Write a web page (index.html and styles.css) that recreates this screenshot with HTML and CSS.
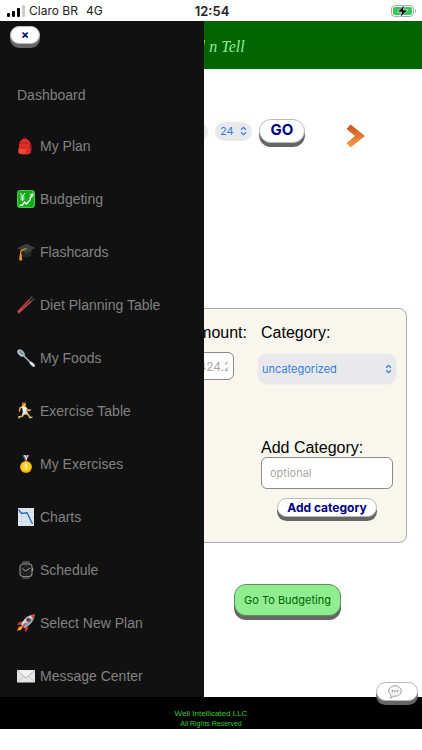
FILE: index.html
```html
<!DOCTYPE html>
<html lang="en">
<head>
    <meta charset="UTF-8">
    <meta name="viewport" content="width=device-width, initial-scale=1.0">
    <title>Well n Tell</title>
    <link rel="stylesheet" href="styles.css">
</head>
<body>

    <!-- phone status bar -->
    <div class="status-bar">
        <div class="carrier">
            <svg width="18" height="12" viewBox="0 0 18 12">
                <rect x="0" y="8" width="3" height="4" rx="1"/>
                <rect x="5" y="6" width="3" height="6" rx="1"/>
                <rect x="10" y="3" width="3" height="9" rx="1"/>
                <rect x="15" y="0" width="3" height="12" rx="1" fill="#ccc"/>
            </svg>
            <span>Claro BR</span>
            <span class="network">4G</span>
        </div>
        <div class="clock">12:54</div>
        <div class="battery">
            <svg width="26" height="14" viewBox="0 0 26 14">
                <rect x="0.5" y="1.5" width="22" height="11" rx="3.5" fill="#fff" stroke="#a9a9a9"/>
                <rect x="2" y="3" width="19" height="8" rx="2" fill="#34c759"/>
                <path d="M24 5c1.3.4 1.3 3.6 0 4z" fill="#a9a9a9"/>
                <path d="M13.5 0.5 6.5 8h4l-1.500 5.500L17 6h-4.500z" fill="#000" stroke="#fff" stroke-width="0.7"/>
            </svg>
        </div>
    </div>

    <div class="app">

        <!-- side menu, opens over the page -->
        <nav class="sidenav">
            <div class="sidenav-top">
                <button class="btn btn-close" aria-label="Close menu">×</button>
            </div>
            <a href="#" class="menu-link">Dashboard</a>
            <a href="#" class="menu-link menu-item">
                <svg class="icon" viewBox="0 0 18 18">
                    <path d="M6.500 3V1.500Q6.500.5 7.700.5t1.300 1V3" fill="none" stroke="#a4221c"/>
                    <path d="M12 4q3 3 2.500 8l-1.500 4" fill="none" stroke="#7d2420" stroke-width="1"/>
                    <path d="M2 8q.5-6 6-6.200 5 .2 5.300 6.200l.5 7.500Q13 17.500 8 17.500T1.500 16z" fill="#df2d27"/>
                    <path d="M1.500 11h7.500v5.500q-6 .5-7.500-.5z" fill="#f0453c"/>
                    <path d="M3 6.500q4-2 9 0M2 11h7" fill="none" stroke="#a81c19" stroke-width=".7"/>
                </svg>
                My Plan
            </a>
            <a href="#" class="menu-link menu-item">
                <svg class="icon" viewBox="0 0 18 18">
                    <rect width="18" height="18" rx="3" fill="#12ad18"/>
                    <rect x=".5" y=".5" width="17" height="17" rx="3" fill="none" stroke="#44c946"/>
                    <path d="M3 3l2.500 3.500L8 3M5.500 6.500V11M3.500 7h4M3.500 9h4" fill="none" stroke="#fff" stroke-width="1"/>
                    <path d="M2.500 15.500l3-.5 2-3 2 2 3.500-4 .5-2.500L16 4.500" fill="none" stroke="#fff" stroke-width="1.400"/>
                    <path d="M12.500 4.500L16.500 3 16 7z" fill="#fff"/>
                </svg>
                Budgeting
            </a>
            <a href="#" class="menu-link menu-item">
                <svg class="icon" viewBox="0 0 18 18">
                    <path d="M5 8v5q3 3 9 0l1-6z" fill="#242628"/>
                    <path d="M.5 5.500L9.500 1l8 4-7.500 5.500z" fill="#3c3f42"/>
                    <path d="M.5 5.500L9.500 1l8 4" fill="none" stroke="#505355" stroke-width=".5"/>
                    <path d="M9.500 5.500L4.500 7.500q-1 1-1 6" fill="none" stroke="#e79c23" stroke-width="1.200"/>
                    <path d="M2.800 11h1.800l.6 6-1.500.8-1.500-.8z" fill="#e79c23"/>
                </svg>
                Flashcards
            </a>
            <a href="#" class="menu-link menu-item">
                <svg class="icon" viewBox="0 0 18 18">
                    <path d="M1 15.500L12 4M1.500 17L14 5.500" stroke="#c4413e" stroke-width="1.500" stroke-linecap="round"/>
                    <path d="M12 4l3-3M14 5.500L17 3" stroke="#55494a" stroke-width="1.500" stroke-linecap="round"/>
                    <path d="M2 16L13.500 5" stroke="#ef7770" stroke-width=".4"/>
                </svg>
                Diet Planning Table
            </a>
            <a href="#" class="menu-link menu-item">
                <svg class="icon" viewBox="0 0 18 18">
                    <path d="M6 6l10.500 10.500" stroke="#a9b5c0" stroke-width="1.500" stroke-linecap="round"/>
                    <path d="M14 14l2.600 2.600" stroke="#dce5ed" stroke-width="2.800" stroke-linecap="round"/>
                    <ellipse cx="4" cy="4" rx="2.800" ry="4.200" transform="rotate(-45 4 4)" fill="#c4d1dc"/>
                    <ellipse cx="4.300" cy="3.800" rx="1.600" ry="3" transform="rotate(-45 4.300 3.800)" fill="#8293a0"/>
                </svg>
                My Foods
            </a>
            <a href="#" class="menu-link menu-item">
                <svg class="icon" viewBox="0 0 18 18">
                    <path d="M6 4.500L3 6 2.500 9M9 6l2 2.500 2.500-.5" fill="none" stroke="#f3bc36" stroke-width="1.400" stroke-linecap="round"/>
                    <path d="M8 10.500l3 2 2 3M7 11l-1.500 3-3 1" fill="none" stroke="#efb12c" stroke-width="1.700"/>
                    <path d="M5 4l4 .5 1 6-4 1z" fill="#f5f5f4"/>
                    <path d="M6 9.500l4-.5 1 2.500-2.500 1-3.500.5z" fill="#dedede"/>
                    <circle cx="7" cy="2.200" r="2" fill="#f8c13b"/>
                    <path d="M5 2q0-2 2-2l2 1.500q-2 0-2 1z" fill="#875727"/>
                    <path d="M12.500 15.800l3-.8M2 14v2.500" stroke="#e6e6e6" stroke-width="1.200"/>
                </svg>
                Exercise Table
            </a>
            <a href="#" class="menu-link menu-item">
                <svg class="icon" viewBox="0 0 18 18">
                    <path d="M5 0h2.500L10 6H8z" fill="#3d4f9f"/>
                    <path d="M7 0h1.500L10 4 9 6z" fill="#e7e7ef"/>
                    <path d="M12.500 0H10L7.500 6h2z" fill="#a73551"/>
                    <path d="M11 0h-1.200L8.500 5.500h1z" fill="#f1e6eb"/>
                    <circle cx="9" cy="12" r="6" fill="#e9a313"/>
                    <circle cx="9" cy="11.700" r="5" fill="#ffce26"/>
                    <path d="M7.800 10.300l1.400-1v5.500" fill="none" stroke="#fff0ad" stroke-width="1.500"/>
                </svg>
                My Exercises
            </a>
            <a href="#" class="menu-link menu-item">
                <svg class="icon" viewBox="0 0 18 18">
                    <rect x="1" width="16" height="18" fill="#dce7ef"/>
                    <path d="M5 0v18M9 0v18M13 0v18M1 4.500h16M1 9h16M1 13.500h16" stroke="#c2d3df" stroke-width=".5"/>
                    <path d="M1.500 1.500l3 4 5.500-.7L15.500 16" fill="none" stroke="#2a68bd" stroke-width="1.300"/>
                </svg>
                Charts
            </a>
            <a href="#" class="menu-link menu-item">
                <svg class="icon" viewBox="0 0 18 18">
                    <path d="M5 4l.5-4h7l.5 4zM5 14l.5 4h7l.5-4z" fill="#484848"/>
                    <rect x="3" y="3" width="12" height="12.500" rx="3" fill="#1c1c1c" stroke="#888" stroke-width="1.200"/>
                    <path d="M15.700 7v3" stroke="#aaa" stroke-width="1"/>
                    <path d="M5.500 7.500L8.500 10 13 7" fill="none" stroke="#bbb" stroke-width=".9"/>
                    <circle cx="9" cy="9.200" r="4.300" fill="none" stroke="#686868" stroke-width=".7" stroke-dasharray=".7 1.500"/>
                </svg>
                Schedule
            </a>
            <a href="#" class="menu-link menu-item">
                <svg class="icon" viewBox="0 0 18 18">
                    <path d="M6 7.500L2 8 0 11l4.500-.5M10.500 12l.5 3-3 3-.2-4.500" fill="#d7382d"/>
                    <path d="M5 11.500L1.500 13 0 17l4-1.300 2-2.700z" fill="#f46d20"/>
                    <path d="M4.500 12.500L2 14.500l-.8 1.700 3-1z" fill="#ffd43a"/>
                    <path d="M17.500.5Q10 .5 5 8.500l-.8 2.500L7 13.800l2.500-.8Q17.500 8 17.500.5z" fill="#cbd9e4"/>
                    <path d="M17.500.5q-.2 7-8 12.500L7 13.800 5.500 12Q14 7 17.500.5z" fill="#8ea3b6"/>
                    <path d="M13.500 1.500Q15 .5 17.500.5q0 2.500-1 4.200z" fill="#dc3b32"/>
                    <circle cx="11.500" cy="6" r="2" fill="#33485b" stroke="#c33d39" stroke-width=".8"/>
                    <path d="M9 9l-4 4" stroke="#d33b31" stroke-width="1.400"/>
                </svg>
                Select New Plan
            </a>
            <a href="#" class="menu-link menu-item">
                <svg class="icon" viewBox="0 0 18 18">
                    <rect y="3" width="18" height="12.500" rx=".7" fill="#e4e4e4"/>
                    <path d="M.5 15l6.500-6M17.500 15L11 9" stroke="#b7b7b7" stroke-width=".7"/>
                    <path d="M.5 3.500l7.300 6.500q1.200 1 2.400 0l7.300-6.500" fill="#f2f2f2" stroke="#9c9c9c" stroke-width=".7"/>
                </svg>
                Message Center
            </a>
        </nav>

        <header class="header">
            <h1 class="logo">Well n Tell</h1>
        </header>

        <main class="main">
            <form class="date-row">
                <div class="picker">
                    <select class="select" aria-label="Day">
                        <option>24</option>
                    </select>
                    <svg class="arrows" viewBox="0 0 8 12"><path d="M1 4.500l3-3 3 3M1 7.500l3 3 3-3"/></svg>
                </div>
                <div class="picker">
                    <select class="select" aria-label="Year">
                        <option>24</option>
                    </select>
                    <svg class="arrows" viewBox="0 0 8 12"><path d="M1 4.500l3-3 3 3M1 7.500l3 3 3-3"/></svg>
                </div>
                <button type="button" class="btn btn-go">GO</button>
                <button type="button" class="next" aria-label="Next day">
                    <svg width="20" height="24" viewBox="0 0 20 24">
                        <defs>
                            <linearGradient id="orange" x1="0" y1="0" x2="0" y2="1">
                                <stop offset="0" stop-color="#c9501f"/>
                                <stop offset="1" stop-color="#f4a04c"/>
                            </linearGradient>
                        </defs>
                        <path d="M4.500.5L19 12 4.500 23.500.5 19 9 12 .5 5z" fill="url(#orange)"/>
                    </svg>
                </button>
            </form>

            <form class="card">
                <div class="amount">
                    <label class="label" for="amount">Amount:</label>
                    <input class="input input-amount" id="amount" type="text" placeholder="424.25">
                </div>
                <div class="category">
                    <label class="label" for="category">Category:</label>
                    <div class="picker picker-wide">
                        <select class="select select-wide" id="category">
                            <option>uncategorized</option>
                        </select>
                        <svg class="arrows" viewBox="0 0 8 12"><path d="M1 4.500l3-3 3 3M1 7.500l3 3 3-3"/></svg>
                    </div>
                    <label class="label label-add" for="new-category">Add Category:</label>
                    <input class="input" id="new-category" type="text" placeholder="optional">
                    <button type="button" class="btn btn-add">Add category</button>
                </div>
            </form>

            <div class="actions">
                <button class="btn btn-budget">Go To Budgeting</button>
            </div>
        </main>

        <button class="btn btn-chat" aria-label="Chat">
            <svg width="14" height="14" viewBox="0 0 14 14">
                <path d="M7 .8c3.700 0 6.300 2.200 6.300 5.200s-2.600 5.200-6.300 5.200l-1.500-.1Q4 13 2 13q1.300-1.300 1-2.900Q.7 8.700.7 6C.7 3 3.300.8 7 .8z" fill="#f4f4f4" stroke="#888" stroke-width=".8"/>
                <circle cx="4.500" cy="6" r=".8" fill="#777"/>
                <circle cx="7" cy="6" r=".8" fill="#777"/>
                <circle cx="9.500" cy="6" r=".8" fill="#777"/>
            </svg>
        </button>
    </div>

    <footer class="footer">
        <p class="company">Well Intellicated LLC</p>
        <p class="rights">All Rights Reserved</p>
    </footer>

</body>
</html>
```
FILE: styles.css
```css
*{
    box-sizing: border-box;
    margin: 0;
    padding: 0;
}

body{
    background-color: white;
    font-family: "Liberation Sans", Arial, sans-serif;
    font-size: 16px;
    color: black;
}

button, input, select{
    font-family: Inter, sans-serif;
    font-size: 11px;
}

/* status bar */

.status-bar{
    display: flex;
    align-items: center;
    height: 21px;
    padding: 0 5px 0 7px;
    font-family: Inter, sans-serif;
    font-size: 12px;
    color: #222;
}

.carrier, .battery{
    display: flex;
    align-items: center;
    flex: 1;
    gap: 4px;
}

.network{
    margin-left: 4px;
}

.battery{
    justify-content: flex-end;
}

.clock{
    font-size: 13px;
    font-weight: 600;
}

/* page */

.app{
    position: relative;
}

.header{
    background-color: #006400;
    height: 48px;
    text-align: center;
}

.logo{
    font-family: "Liberation Serif", serif;
    font-size: 16px;
    font-style: italic;
    font-weight: normal;
    line-height: 52px;
    color: lightgreen;
}

.main{
    padding: 49px 15px 81px;
}

/* raised buttons */

.btn{
    background-color: white;
    border: 1px solid #bbb;
    border-radius: 12px;
    box-shadow: 0 4px 0 #666;
    color: navy;
    font-size: 12px;
    font-weight: bold;
    cursor: pointer;
}

.btn:active{
    transform: translateY(2px);
    box-shadow: 0 2px 0 #666;
}

/* side menu */

.sidenav{
    position: absolute;
    top: 0;
    left: 0;
    bottom: 0;
    width: 204px;
    background-color: #111;
    overflow: hidden;
    z-index: 1;
}

.sidenav-top{
    height: 49px;
    padding: 5px 10px;
}

.btn-close{
    display: block;
    width: 30px;
    height: 18px;
    line-height: 16px;
}

.menu-link{
    display: block;
    padding: 16px 17px;
    font-size: 14px;
    line-height: 18px;
    color: #818181;
    text-decoration: none;
}

.menu-link:hover{
    color: #f1f1f1;
}

.menu-item{
    display: flex;
    align-items: center;
    gap: 5px;
    line-height: 21px;
}

.icon{
    width: 18px;
    height: 18px;
    margin-bottom: 2px;
}

/* date picker */

.date-row{
    display: flex;
    align-items: center;
    justify-content: flex-end;
    gap: 7px;
    height: 26px;
    padding-right: 41px;
}

.picker{
    position: relative;
}

.select{
    display: block;
    appearance: none;
    width: 37px;
    height: 19px;
    padding-left: 5px;
    background-color: #e9e9eb;
    border: none;
    border-radius: 10px;
    color: #2d7fe5;
}

/* arrows lie over the select */
.arrows{
    position: absolute;
    top: 50%;
    right: 4px;
    width: 9px;
    height: 10px;
    margin-top: -5px;
    fill: none;
    stroke: #2d7fe5;
    stroke-width: 1.4;
    pointer-events: none;
}

.btn-go{
    width: 46px;
    height: 24px;
    font-size: 15px;
    line-height: 20px;
    padding-bottom: 2px;
}

.next{
    margin-top: 10px;
    margin-left: 34px;
    height: 24px;
    background: none;
    border: none;
}

/* budget form */

.card{
    display: flex;
    justify-content: flex-end;
    gap: 10px;
    margin-top: 164px;
    padding: 15px 9px 25px;
    background-color: #f9f6ed;
    border: 1px solid #aaa;
    border-radius: 8px;
}

.label{
    display: block;
    line-height: 18px;
}

.category{
    width: 140px;
}

.category .label{
    padding-left: 4px;
}

.picker-wide{
    margin-top: 11px;
}

.select-wide{
    width: 100%;
    height: 32px;
    padding-left: 4px;
    border: 1px solid #f1f1f1;
}

.category .label-add{
    margin-top: 54px;
}

.input{
    display: block;
    width: 132px;
    height: 32px;
    margin-left: 4px;
    padding: 0 5px 0 8px;
    background-color: white;
    border: 1px solid #8a8a8a;
    border-radius: 6px;
}

.input::placeholder{
    color: #aaa;
}

.input-amount{
    width: 47px;
    height: 28px;
    margin-top: 10px;
    margin-left: 0;
    padding-left: 10px;
    font-size: 12px;
}

.btn-add{
    display: block;
    height: 19px;
    margin: 9px auto 0;
    padding: 0 9px;
}

.actions{
    display: flex;
    justify-content: flex-end;
    margin-top: 41px;
    padding-right: 66px;
}

.btn-budget{
    height: 32px;
    padding: 0 9px;
    background-color: lightgreen;
    border-color: #5f8f5f;
    color: darkgreen;
    font-size: 11px;
    font-weight: normal;
}

/* chat button stays over the footer edge */
.btn-chat{
    position: absolute;
    right: 4px;
    bottom: -4px;
    width: 42px;
    height: 19px;
    padding-right: 4px;
    line-height: 0;
    z-index: 2;
}

/* footer */

.footer{
    height: 32px;
    padding-top: 11px;
    background-color: black;
    color: limegreen;
    text-align: center;
}

.company{
    font-size: 8px;
    line-height: 11px;
}

.rights{
    font-size: 7px;
    line-height: 10px;
}
```
